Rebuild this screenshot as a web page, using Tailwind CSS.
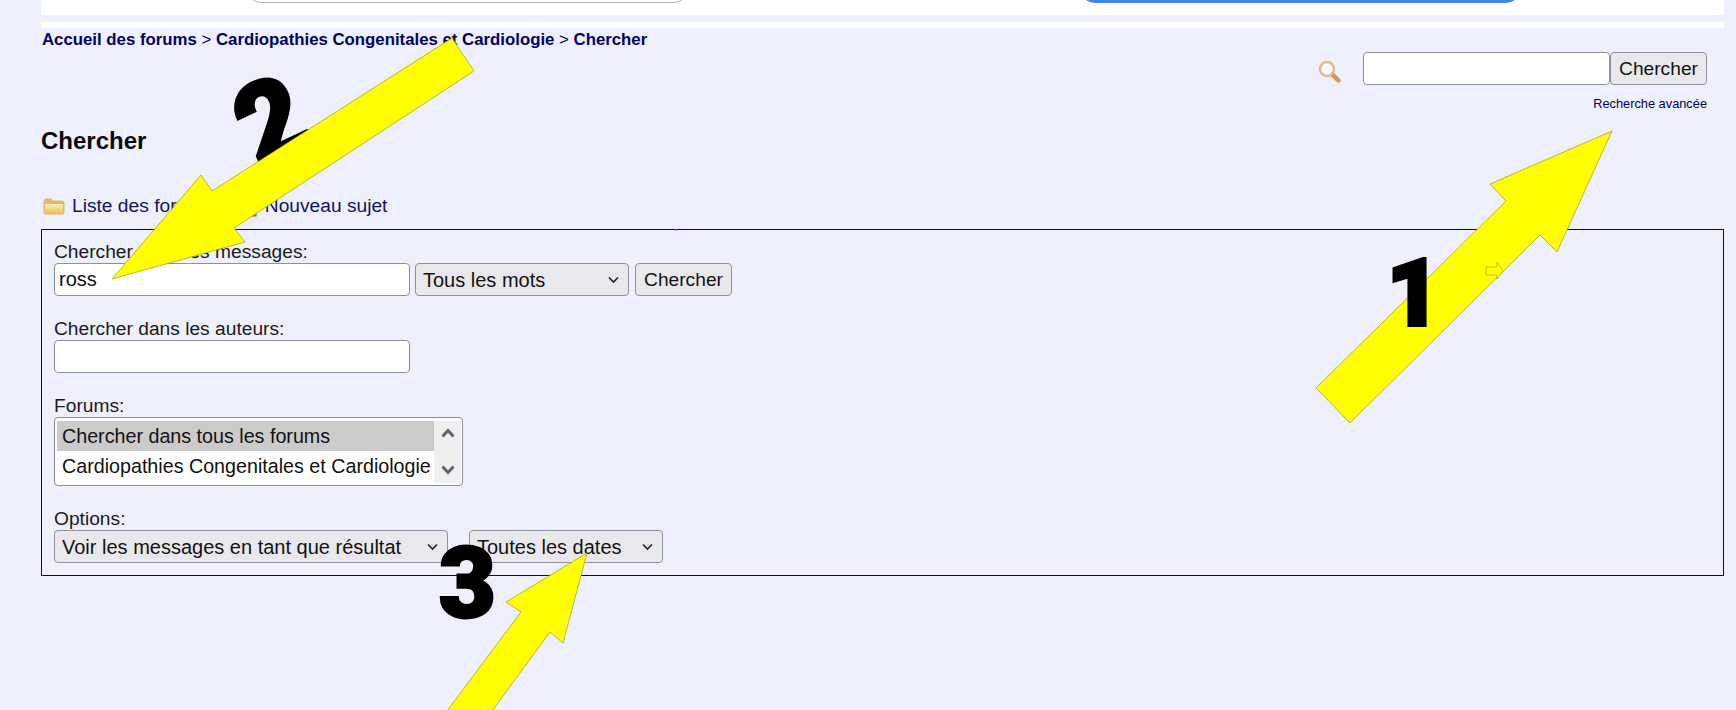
<!DOCTYPE html>
<html lang="fr">
<head>
    <meta charset="UTF-8">
    <title>Chercher</title>
    <script src="https://cdn.jsdelivr.net/npm/@tailwindcss/browser@4"></script>
</head>
<body class="relative h-[710px] overflow-hidden bg-[#eef0fe] font-['Liberation_Sans',Arial,sans-serif] text-[19.2px] leading-[22px] text-[#1a1a1a]">
    <div class="ml-[41px] w-[1683px]">
        <!-- Top of the page, cut off by the screenshot -->
        <div class="h-[15px] bg-white overflow-hidden">
            <div class="flex -mt-[27px]">
                <div class="ml-[205px] w-[443px] h-[30px] bg-white border border-[#b5b5b5] rounded-[15px]"></div>
                <div class="ml-[391px] w-[441px] h-[30px] bg-[#4285f0] rounded-[15px]"></div>
            </div>
        </div>
        <div class="mt-[7px] h-[6px] bg-white"></div>

        <!-- Breadcrumb -->
        <div class="mt-[2px] ml-[1px] h-[20px] text-[16.8px] leading-[20px] text-[#000066] whitespace-nowrap">
            <a href="#" class="font-bold">Accueil des forums</a> &gt; <a href="#" class="font-bold">Cardiopathies Congenitales et Cardiologie</a> &gt; <a href="#" class="font-bold">Chercher</a>
        </div>

        <!-- Quick search -->
        <div class="mt-[2px] flex justify-end items-start pr-[17px]">
            <svg class="mt-[8px] mr-[22px]" width="23" height="23" viewBox="0 0 23 23">
                <line x1="14" y1="14" x2="20.500" y2="20.500" stroke="#d09a58" stroke-width="4.500" stroke-linecap="round"/>
                <circle cx="9" cy="9" r="7" fill="#f8f9fe" stroke="#e2bc8c" stroke-width="2.500"/>
            </svg>
            <input type="text" class="w-[247px] h-[33px] bg-white border border-[#8f8f9d] rounded-[4px]">
            <button class="w-[97px] h-[33px] bg-[#e9e9ed] border border-[#8f8f9d] rounded-[4px] text-[19.2px] text-[#111]">Chercher</button>
        </div>
        <div class="mt-[10px] pr-[17px] text-right text-[12.8px] leading-[18px] text-[#000066]"><a href="#">Recherche avancée</a></div>

        <h1 class="mt-[14px] text-[24px] leading-[28px] font-bold text-[#0a0a0a]">Chercher</h1>

        <!-- Links -->
        <div class="mt-[40px] h-[22px] flex items-center text-[#14145f]">
            <svg class="ml-[2px] mr-[7px]" width="22" height="17" viewBox="0 0 22 17">
                <defs>
                    <linearGradient id="folder" x1="0" y1="0" x2="0" y2="1">
                        <stop offset="0" stop-color="#fdf0b8"/>
                        <stop offset="1" stop-color="#f0c558"/>
                    </linearGradient>
                </defs>
                <path d="M1 3q0-2 2-2h5l2 2h9q2 0 2 2v10q0 1-1 1H2q-1 0-1-1z" fill="#e3bb68" stroke="#dcb878"/>
                <path d="M2 6h18v9H2z" fill="url(#folder)"/>
            </svg>
            <a href="#">Liste des forums</a>
            <svg class="ml-[27px] mr-[7px] mt-[3px]" width="18" height="18" viewBox="0 0 18 18">
                <rect x="2" y="1" width="14" height="16" fill="#7fa36a" stroke="#55794a"/>
            </svg>
            <a href="#">Nouveau sujet</a>
        </div>

        <!-- Search form -->
        <form class="mt-[12px] h-[347px] border border-[#0000a0] px-[12px] pt-[11px] flex flex-col gap-[22px]">
            <div>
                <label class="block h-[22px]">Chercher dans les messages:</label>
                <div class="flex">
                    <input type="text" value="ross" class="w-[356px] h-[33px] bg-white border border-[#8f8f9d] rounded-[4px] px-[4px] text-[20px] text-[#111]">
                    <div class="relative ml-[5px]">
                        <select class="appearance-none w-[214px] h-[33px] bg-[#e9e9ed] border border-[#8f8f9d] rounded-[4px] pl-[7px] text-[20px] text-[#111]">
                            <option>Tous les mots</option>
                        </select>
                        <svg class="absolute right-[10px] top-[13px]" width="11" height="8" viewBox="0 0 11 8"><path d="M1 1.500l4.500 4.500 4.500-4.500" fill="none" stroke="#222" stroke-width="1.600"/></svg>
                    </div>
                    <button type="button" class="ml-[6px] w-[97px] h-[33px] bg-[#e9e9ed] border border-[#8f8f9d] rounded-[4px] text-[19.2px] text-[#111]">Chercher</button>
                </div>
            </div>
            <div>
                <label class="block h-[22px]">Chercher dans les auteurs:</label>
                <input type="text" class="block w-[356px] h-[33px] bg-white border border-[#8f8f9d] rounded-[4px]">
            </div>
            <div>
                <label class="block h-[22px]">Forums:</label>
                <div class="w-[409px] h-[69px] bg-white border border-[#8f8f9d] rounded-[4px] flex pl-[2px] pt-[3px] text-[19.700px] leading-[30px] text-[#111] whitespace-nowrap">
                    <div class="w-[377px]">
                        <div class="h-[30px] pl-[5px] bg-[#cbcbcb]">Chercher dans tous les forums</div>
                        <div class="h-[32px] pl-[5px]">Cardiopathies Congenitales et Cardiologie</div>
                    </div>
                    <div class="w-[27px] h-[62px] bg-[#f0f0f0] flex flex-col justify-between items-center pt-[7px] pb-[8px]">
                        <svg width="14" height="10" viewBox="0 0 14 10"><path d="M1.500 8.500l5.500-6 5.500 6" fill="none" stroke="#60646a" stroke-width="3"/></svg>
                        <svg width="14" height="10" viewBox="0 0 14 10"><path d="M1.500 1.500l5.500 6 5.500-6" fill="none" stroke="#60646a" stroke-width="3"/></svg>
                    </div>
                </div>
            </div>
            <div>
                <label class="block h-[22px]">Options:</label>
                <div class="flex">
                    <div class="relative">
                        <select class="appearance-none w-[394px] h-[33px] bg-[#e9e9ed] border border-[#8f8f9d] rounded-[4px] pl-[7px] text-[20px] text-[#111]">
                            <option>Voir les messages en tant que résultat</option>
                        </select>
                        <svg class="absolute right-[10px] top-[13px]" width="11" height="8" viewBox="0 0 11 8"><path d="M1 1.500l4.500 4.500 4.500-4.500" fill="none" stroke="#222" stroke-width="1.600"/></svg>
                    </div>
                    <div class="relative ml-[21px]">
                        <select class="appearance-none w-[194px] h-[33px] bg-[#e9e9ed] border border-[#8f8f9d] rounded-[4px] pl-[7px] text-[20px] text-[#111]">
                            <option>Toutes les dates</option>
                        </select>
                        <svg class="absolute right-[10px] top-[13px]" width="11" height="8" viewBox="0 0 11 8"><path d="M1 1.500l4.500 4.500 4.500-4.500" fill="none" stroke="#222" stroke-width="1.600"/></svg>
                    </div>
                </div>
            </div>
        </form>
    </div>

    <!-- Annotations drawn over the page -->
    <div class="absolute left-[239px] top-[66px] rotate-[-25deg] font-['Roboto',sans-serif] text-[112px] leading-[110px] font-black text-black [-webkit-text-stroke:3px_black]">2</div>
    <svg class="absolute left-0 top-0" width="1736" height="710" viewBox="0 0 1736 710">
        <polygon points="676,229 677,229 677,231 676,231" fill="#6a6ad0"/>
        <polygon points="1612,131 1490,184 1506,201 1316,388 1350,423 1540,235 1557,252" fill="#ffff00" stroke="#9c9c20" stroke-width="0.700"/>
        <polygon points="1486,267 1497,267 1497,262 1503,271 1497,279 1497,275 1486,275" fill="#ffff00" stroke="#a8a820" stroke-width="0.700"/>
        <polygon points="112,279 245,242 234,228 474,71 452,38 212,191 201,175" fill="#ffff00" stroke="#9c9c20" stroke-width="0.700"/>
        <polygon points="587,553 506,602 521,612 447,711 492,711 550,632 563,643" fill="#ffff00" stroke="#9c9c20" stroke-width="0.700"/>
    </svg>
    <div class="absolute left-[1387px] top-[239px] font-['Roboto',sans-serif] text-[92px] leading-[110px] font-black text-black [-webkit-text-stroke:4px_black]">1</div>
    <div class="absolute left-[439px] top-[529px] font-['Roboto',sans-serif] text-[98px] leading-[110px] font-black text-black [-webkit-text-stroke:3px_black]">3</div>
</body>
</html>
